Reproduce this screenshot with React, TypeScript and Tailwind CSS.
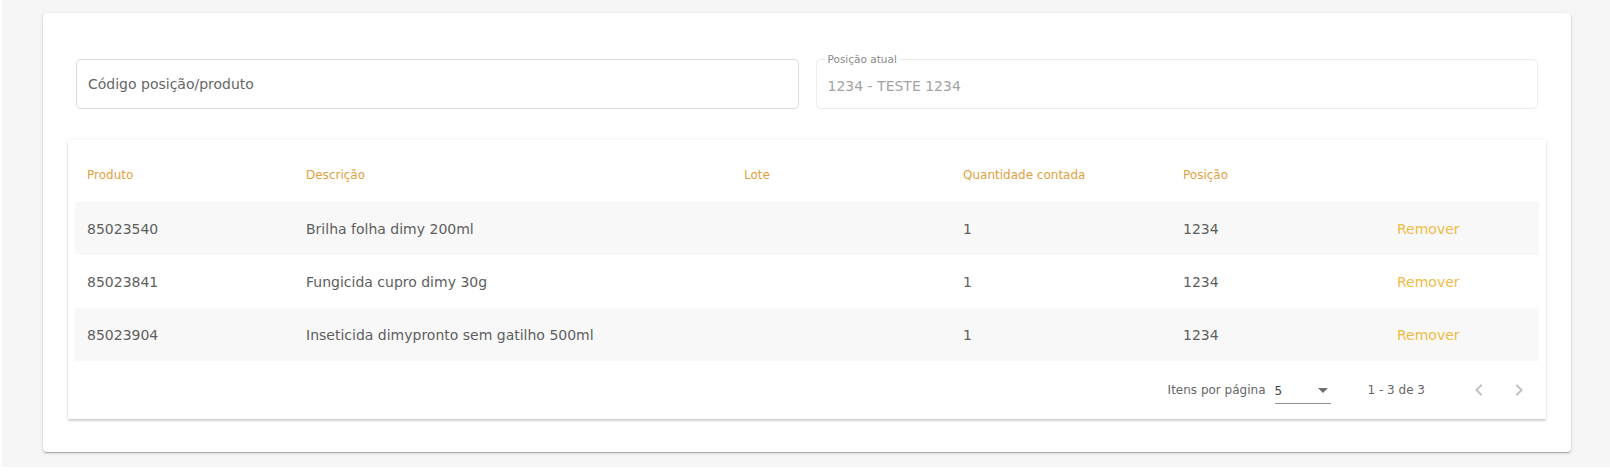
import React from 'react';

const rows = [
  { produto: '85023540', descricao: 'Brilha folha dimy 200ml', lote: '', qtd: '1', posicao: '1234' },
  { produto: '85023841', descricao: 'Fungicida cupro dimy 30g', lote: '', qtd: '1', posicao: '1234' },
  { produto: '85023904', descricao: 'Inseticida dimypronto sem gatilho 500ml', lote: '', qtd: '1', posicao: '1234' },
];

const cols = 'grid grid-cols-[219px_438px_219px_220px_214px_1fr]';

const App: React.FC = () => {
  return (
    <div className="w-[1610px] h-[475px] bg-white font-['DejaVu_Sans',sans-serif]">
      <div className="h-[467px] ml-[2px] bg-[#f5f5f5] pt-[13px] pl-[41px] pr-[39px]">
        <div className="h-[439px] bg-white rounded-[4px] shadow-[0_1px_3px_rgba(0,0,0,0.2),0_1px_1px_rgba(0,0,0,0.12),0_2px_1px_-1px_rgba(0,0,0,0.1)] px-[25px] pt-[46px]">
          {/* campos */}
          <div className="mx-[8px] flex gap-[17px]">
            <div className="flex-1 h-[50px] border border-[#dadada] rounded-[5px] flex items-center pl-[11px]">
              <span className="text-[14px] text-[#666666]">Código posição/produto</span>
            </div>
            <div className="relative flex-1 h-[50px] border border-[#ececec] rounded-[5px] flex items-center pl-[11px] pt-[4px]">
              <span className="absolute left-[8px] top-[-8px] bg-white px-[3px] text-[10.5px] leading-[14px] text-[#8a8a8a]">
                Posição atual
              </span>
              <span className="text-[14px] text-[#a3a3a3]">1234 - TESTE 1234</span>
            </div>
          </div>

          {/* tabela */}
          <div className="mt-[31px] h-[279px] bg-white shadow-[0_2px_2px_rgba(0,0,0,0.16),0_0_3px_rgba(0,0,0,0.08)] px-[7px]">
            <div className={`${cols} h-[62px] items-center pt-[7px] text-[12px] text-[#e2a040]`}>
              <div className="pl-[12px]">Produto</div>
              <div className="pl-[12px]">Descrição</div>
              <div className="pl-[12px]">Lote</div>
              <div className="pl-[12px]">Quantidade contada</div>
              <div className="pl-[12px]">Posição</div>
              <div />
            </div>
            {rows.map((r, i) => (
              <div
                key={r.produto}
                className={`${cols} h-[53px] items-center pt-[1px] text-[14px] text-[#5e5e5e] ${i % 2 === 0 ? 'bg-[#f8f8f8]' : 'bg-white'}`}
              >
                <div className="pl-[12px]">{r.produto}</div>
                <div className="pl-[12px]">{r.descricao}</div>
                <div className="pl-[12px]">{r.lote}</div>
                <div className="pl-[12px]">{r.qtd}</div>
                <div className="pl-[12px]">{r.posicao}</div>
                <div className="pl-[12px]">
                  <button className="text-[#efbb43]">Remover</button>
                </div>
              </div>
            ))}
            {/* paginação */}
            <div className="h-[58px] flex items-center justify-end text-[12px] text-[#666666]">
              <span>Itens por página</span>
              <div className="ml-[9px] w-[56px] h-[28px] border-b border-[#8f8f8f] flex items-center justify-between pt-[2px]">
                <span className="text-[12px] text-[#444444]">5</span>
                <svg width="10" height="5" viewBox="0 0 10 5" className="mr-[3px]">
                  <path d="M0 0 L5 5 L10 0 Z" fill="#6f6f6f" />
                </svg>
              </div>
              <span className="ml-[37px]">1 - 3 de 3</span>
              <div className="ml-[34px] flex">
                <button className="w-[40px] h-[40px] flex items-center justify-center">
                  <svg width="24" height="24" viewBox="0 0 24 24">
                    <path d="M15.41 7.41L14 6l-6 6 6 6 1.41-1.41L10.83 12z" fill="#c2c2c2" />
                  </svg>
                </button>
                <button className="w-[40px] h-[40px] flex items-center justify-center">
                  <svg width="24" height="24" viewBox="0 0 24 24">
                    <path d="M10 6L8.59 7.41 13.17 12l-4.58 4.59L10 18l6-6z" fill="#c2c2c2" />
                  </svg>
                </button>
              </div>
            </div>
          </div>
        </div>
      </div>
    </div>
  );
};

export default App;
